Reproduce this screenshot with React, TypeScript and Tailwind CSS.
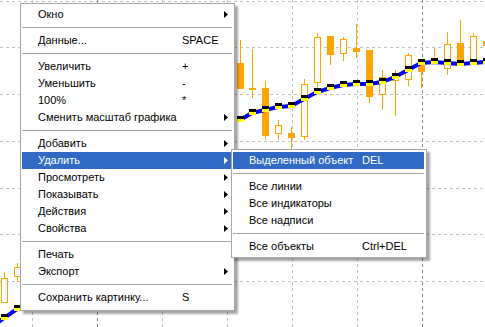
import React from "react";

type Item = { label?: string; shortcut?: string; arrow?: boolean; sep?: boolean; active?: boolean };

const mainItems: Item[] = [
  { label: "Окно", arrow: true },
  { sep: true },
  { label: "Данные...", shortcut: "SPACE" },
  { sep: true },
  { label: "Увеличить", shortcut: "+" },
  { label: "Уменьшить", shortcut: "-" },
  { label: "100%", shortcut: "*" },
  { label: "Сменить масштаб графика", arrow: true },
  { sep: true },
  { label: "Добавить", arrow: true },
  { label: "Удалить", arrow: true, active: true },
  { label: "Просмотреть", arrow: true },
  { label: "Показывать", arrow: true },
  { label: "Действия", arrow: true },
  { label: "Свойства", arrow: true },
  { sep: true },
  { label: "Печать" },
  { label: "Экспорт", arrow: true },
  { sep: true },
  { label: "Сохранить картинку...", shortcut: "S" },
];

const subItems: Item[] = [
  { label: "Выделенный объект", shortcut: "DEL", active: true },
  { sep: true },
  { label: "Все линии" },
  { label: "Все индикаторы" },
  { label: "Все надписи" },
  { sep: true },
  { label: "Все объекты", shortcut: "Ctrl+DEL" },
];

// [center x, body top, body bottom, wick top, wick bottom, filled]
const candles: [number, number, number, number, number, boolean][] = [
  [240, 63, 88, 40, 88, true],
  [252, 88, 89, 49, 98, true],
  [265, 88, 135, 81, 140, true],
  [278, 125, 133, 120, 140, false],
  [291, 133, 137, 127, 150, true],
  [304, 84, 136, 79, 140, false],
  [317, 37, 82, 33, 88, false],
  [330, 36, 54, 36, 65, true],
  [343, 39, 53, 37, 61, false],
  [356, 48, 51, 24, 58, true],
  [369, 50, 96, 50, 103, true],
  [382, 77, 94, 70, 110, false],
  [395, 75, 80, 70, 116, false],
  [408, 55, 79, 53, 86, false],
  [421, 61, 71, 61, 88, true],
  [434, 62, 63, 48, 63, true],
  [447, 44, 68, 32, 75, false],
  [460, 43, 63, 20, 63, true],
  [473, 36, 60, 33, 63, false],
  [486, 41, 45, 41, 45, true],
  [4, 278, 302, 272, 303, false],
  [17, 267, 276, 263, 282, false],
];

const ma: [number, number][] = [
  [240, 120], [252, 113], [265, 110], [278, 107], [291, 106], [304, 99], [317, 92], [330, 88],
  [343, 85], [356, 84], [369, 84], [382, 82], [395, 77], [408, 70], [421, 63], [434, 62],
  [447, 63], [460, 64], [473, 63], [486, 62],
];
const maLeft: [number, number][] = [[-4, 324], [4, 318], [17, 309], [26, 304]];

const hLines = [1.5, 47.5, 94.5, 141.5, 188.5, 234.5, 281.5];
const vLines = [32.5, 97.5, 162.5, 227.5, 292.5, 357.5, 422.5];

function Chart() {
  return (
    <svg width="485" height="327" className="block">
      {hLines.map((y) => (
        <line key={y} x1="0" x2="485" y1={y} y2={y} stroke="#c4c4c4" strokeDasharray="3 3" />
      ))}
      {vLines.map((x) => (
        <line
          key={x}
          x1={x}
          x2={x}
          y1="0"
          y2="327"
          stroke={x === 97.5 || x === 422.5 ? "#8a8a8a" : "#c4c4c4"}
          strokeDasharray="3 3"
        />
      ))}
      {candles.map(([cx, bt, bb, wt, wb, filled], i) => (
        <g key={i}>
          <line x1={cx + 0.5} x2={cx + 0.5} y1={wt} y2={wb} stroke="#ffa500" />
          <rect
            x={cx - 2.5}
            y={bt + 0.5}
            width="6"
            height={Math.max(bb - bt, 1)}
            fill={filled ? "#ffa500" : "#ffffff"}
            stroke="#ffa500"
          />
        </g>
      ))}
      {[ma, maLeft].map((pts, k) => (
        <g key={k}>
          <polyline points={pts.map((p) => p.join(",")).join(" ")} fill="none" stroke="#0000ff" strokeWidth="4" />
          {pts.map(([x, y], i) => (
            <g key={i}>
              <rect x={x - 3} y={y - 4} width="7" height="3" fill="#000000" />
              <rect x={x - 3} y={y - 1} width="7" height="3" fill="#ffff00" />
            </g>
          ))}
        </g>
      ))}
    </svg>
  );
}

function Arrow({ white }: { white?: boolean }) {
  return (
    <svg width="4" height="7" viewBox="0 0 4 7" className="block">
      <polygon points="0,0 4,3.5 0,7" fill={white ? "#ffffff" : "#000000"} />
    </svg>
  );
}

function Menu({ items, labelWidth }: { items: Item[]; labelWidth: string }) {
  return (
    <div className="flex flex-col">
      {items.map((it, i) =>
        it.sep ? (
          <div key={i} className="flex h-[9px] items-center">
            <div className="h-px w-full bg-[#a7a6aa]" />
          </div>
        ) : (
          <div
            key={i}
            className={`flex h-[17px] items-center pl-[16px] pr-[4px] ${
              it.active ? "bg-[#316ac5] text-white" : "text-black"
            }`}
          >
            <span className={`${labelWidth} shrink-0 whitespace-nowrap`}>{it.label}</span>
            <span className="flex-1 whitespace-nowrap">{it.shortcut}</span>
            {it.arrow && <Arrow white={it.active} />}
          </div>
        )
      )}
    </div>
  );
}

export default function App() {
  return (
    <div
      className="relative h-[327px] w-[485px] overflow-hidden bg-white text-[11px] leading-none"
      style={{ fontFamily: '"Liberation Sans", Arial, sans-serif' }}
    >
      <Chart />

      <div className="absolute left-[20px] top-[3px] w-[215px] border border-[#a7a6aa] bg-white pb-[4px] pl-[1px] pr-[2px] pt-[2px] shadow-[3px_3px_2px_rgba(0,0,0,0.35)]">
        <Menu items={mainItems} labelWidth="w-[144px]" />
      </div>

      <div className="absolute left-[231px] top-[149px] w-[196px] border border-[#a7a6aa] bg-white pb-[2px] pl-[1px] pr-[2px] pt-[2px] shadow-[3px_3px_2px_rgba(0,0,0,0.35)]">
        <Menu items={subItems} labelWidth="w-[113px]" />
      </div>
    </div>
  );
}
